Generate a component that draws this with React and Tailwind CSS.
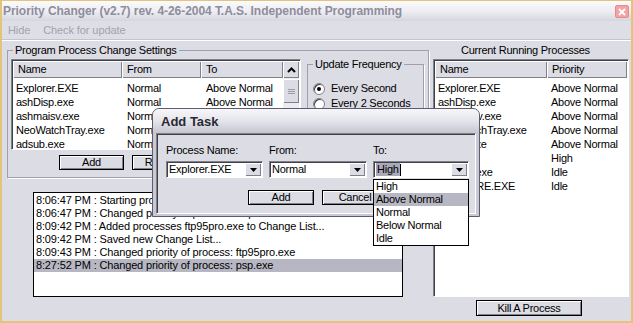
import React from "react";

const changeRows = [
  ["Explorer.EXE", "Normal", "Above Normal"],
  ["ashDisp.exe", "Normal", "Above Normal"],
  ["ashmaisv.exe", "Normal", "Above Normal"],
  ["NeoWatchTray.exe", "Normal", "Above Normal"],
  ["adsub.exe", "Normal", "Above Normal"],
];

const procRows = [
  ["Explorer.EXE", "Above Normal"],
  ["ashDisp.exe", "Above Normal"],
  ["ashmaisv.exe", "Above Normal"],
  ["NeoWatchTray.exe", "Above Normal"],
  ["adsub.exe", "Above Normal"],
  ["psp.exe", "High"],
  ["spoolsv.exe", "Idle"],
  ["IEXPLORE.EXE", "Idle"],
];

const logLines = [
  "8:06:47 PM : Starting process monitor...",
  "8:06:47 PM : Changed priority of process: Explorer.EXE",
  "8:09:42 PM : Added processes ftp95pro.exe to Change List...",
  "8:09:42 PM : Saved new Change List...",
  "8:09:43 PM : Changed priority of process: ftp95pro.exe",
  "8:27:52 PM : Changed priority of process: psp.exe",
];

const sunken =
  "border border-t-[#808088] border-l-[#808088] border-r-white border-b-white shadow-[inset_1px_1px_0_#404048]";
const raised = "bg-[#dcdce4] shadow-[inset_1px_1px_0_#fff,inset_-1px_-1px_0_#808088]";
const button =
  "border border-black bg-[#dcdce4] shadow-[inset_1px_1px_0_#fff,inset_-1px_-1px_0_#808088] flex items-center justify-center leading-none";

function Header({ className, children }) {
  return (
    <div className={`h-[17px] flex items-center pl-[5px] ${raised} ${className}`}>
      {children}
    </div>
  );
}

function DropArrow() {
  return (
    <div className={`w-[16px] h-full flex items-center justify-center ${raised}`}>
      <svg width="7" height="4" viewBox="0 0 7 4">
        <path d="M0 0h7L3.5 4z" fill="#000" />
      </svg>
    </div>
  );
}

function Radio({ checked, label }) {
  return (
    <div className="h-[15px] flex items-center gap-[6px]">
      <div className="w-[12px] h-[12px] rounded-full bg-white border border-[#808088] shadow-[inset_1px_1px_0_#404048] flex items-center justify-center">
        {checked && <div className="w-[4px] h-[4px] rounded-full bg-black" />}
      </div>
      <span>{label}</span>
    </div>
  );
}

function AddTask() {
  return (
    <div className="absolute left-[150px] top-[107px] w-[328px] h-[109px] rounded-t-[7px] border border-[#5c5c6c] bg-[#c9c9d5] flex flex-col overflow-visible">
      <div className="h-[24px] rounded-t-[6px] bg-gradient-to-b from-[#f7f7fa] via-[#e4e4ec] to-[#c6c6d2] flex items-center pl-[8px]">
        <span className="font-bold text-[13px] text-[#2a2a32] tracking-[0px]">Add Task</span>
      </div>
      <div className={`flex-1 mx-[3px] mb-[2px] bg-[#dcdce4] ${sunken} pl-[9px] pt-[10px] flex flex-col`}>
        <div className="flex gap-[6px]">
          <div className="flex flex-col gap-[4px] w-[97px]">
            <span className="h-[13px]">Process Name:</span>
            <div className={`h-[17px] bg-white flex items-center pr-[1px] py-[1px] ${sunken}`}>
              <span className="flex-1 pl-[2px]">Explorer.EXE</span>
              <DropArrow />
            </div>
          </div>
          <div className="flex flex-col gap-[4px] w-[98px]">
            <span className="h-[13px]">From:</span>
            <div className={`h-[17px] bg-white flex items-center pr-[1px] py-[1px] ${sunken}`}>
              <span className="flex-1 pl-[2px]">Normal</span>
              <DropArrow />
            </div>
          </div>
          <div className="flex flex-col gap-[4px] w-[96px]">
            <span className="h-[13px]">To:</span>
            <div className={`relative h-[17px] bg-white flex items-center pr-[1px] py-[1px] ${sunken}`}>
              <span className="flex-1 pl-[2px] flex items-center">
                <span className="bg-[#a9a9b9] px-[1px]">High</span>
                <span className="w-[1px] h-[12px] bg-black" />
              </span>
              <DropArrow />
              <div className="absolute left-[-1px] top-[17px] w-[96px] bg-white border border-black flex flex-col z-10">
                <span className="h-[13px] pl-[2px]">High</span>
                <span className="h-[13px] pl-[2px] bg-[#b7b7c3]">Above Normal</span>
                <span className="h-[13px] pl-[2px]">Normal</span>
                <span className="h-[13px] pl-[2px]">Below Normal</span>
                <span className="h-[13px] pl-[2px]">Idle</span>
              </div>
            </div>
          </div>
        </div>
        <div className="flex gap-[8px] ml-[82px] mt-[12px]">
          <div className={`w-[66px] h-[15px] ${button}`}>Add</div>
          <div className={`w-[66px] h-[15px] ${button}`}>Cancel</div>
        </div>
      </div>
    </div>
  );
}

export default function App() {
  return (
    <div className="relative w-[633px] h-[323px] overflow-hidden bg-[#dcdce4] border-t border-x-2 border-b-2 border-[#e3c47a] flex flex-col font-['Liberation_Sans',Arial,sans-serif] text-[11px] leading-[13px] tracking-[-0.25px] text-black">
      {/* title bar */}
      <div className="h-[20px] flex items-start justify-between pl-[1px] pr-[2px] pt-[3px] bg-gradient-to-b from-[#fbfbfd] via-[#eeeef3] to-[#d6d6e0]">
        <span className="font-bold text-[12px] leading-[15px] text-[#8d8d9b] tracking-[-0.05px]">
          Priority Changer (v2.7) rev. 4-26-2004 T.A.S. Independent Programming
        </span>
        <div className="mt-[1px] w-[14px] h-[13px] rounded-[2px] bg-[#f2a4a4] border border-[#e48c8c] flex items-center justify-center">
          <svg width="8" height="8" viewBox="0 0 8 8">
            <path d="M1 1l6 6M7 1L1 7" stroke="#fff" strokeWidth="1.8" />
          </svg>
        </div>
      </div>

      {/* menu */}
      <div className="h-[20px] flex items-start gap-[13px] pl-[6px] pt-[3px] text-[#a2a2ac] tracking-[-0.1px] bg-[#dedee6] border-b border-white shadow-[inset_0_-1px_0_#c4c4ce]">
        <span>Hide</span>
        <span>Check for update</span>
      </div>

      <div className="flex flex-1">
        {/* left column */}
        <div className="w-[428px] flex flex-col">
          <fieldset className="m-0 p-0 ml-[5px] mt-[3px] w-[422px] h-[134px] min-w-0 border border-[#a0a0ac] shadow-[1px_1px_0_#fff]">
            <legend className="ml-[5px] px-[2px] leading-[13px]">Program Process Change Settings</legend>
            <div className="flex pl-[3px] pt-[2px]">
              <div className="w-[290px] flex flex-col">
                <div className={`h-[91px] bg-white flex ${sunken} p-[1px]`}>
                  <div className="flex-1 flex flex-col">
                    <div className="flex">
                      <Header className="w-[109px]">Name</Header>
                      <Header className="w-[79px]">From</Header>
                      <Header className="flex-1">To</Header>
                    </div>
                    <div className="pt-[3px] flex flex-col">
                      {changeRows.map((r, i) => (
                        <div key={i} className="h-[14px] flex items-center">
                          <span className="w-[109px] pl-[3px]">{r[0]}</span>
                          <span className="w-[79px] pl-[5px]">{r[1]}</span>
                          <span className="pl-[5px]">{r[2]}</span>
                        </div>
                      ))}
                    </div>
                  </div>
                  <div className="w-[16px] flex flex-col bg-[#ececf0]">
                    <div className={`h-[17px] flex items-center justify-center ${raised}`}>
                      <svg width="9" height="6" viewBox="0 0 9 6">
                        <path d="M1 5l3.5-3.5L8 5" fill="none" stroke="#000" strokeWidth="2" />
                      </svg>
                    </div>
                    <div className={`h-[24px] mt-[1px] flex flex-col items-center justify-center gap-[1px] ${raised}`}>
                      <div className="w-[7px] h-[1px] bg-[#9a9aa6]" />
                      <div className="w-[7px] h-[1px] bg-[#9a9aa6]" />
                      <div className="w-[7px] h-[1px] bg-[#9a9aa6]" />
                    </div>
                  </div>
                </div>
                <div className="flex gap-[8px] ml-[48px] mt-[5px]">
                  <div className={`w-[65px] h-[15px] ${button}`}>Add</div>
                  <div className={`w-[65px] h-[15px] ${button}`}>Remove</div>
                </div>
              </div>
              <fieldset className="m-0 p-0 ml-[6px] -mt-[1px] w-[117px] h-[112px] min-w-0 border border-[#a0a0ac] shadow-[1px_1px_0_#fff]">
                <legend className="ml-[5px] px-[2px] leading-[13px]">Update Frequency</legend>
                <div className="flex flex-col pl-[5px] pt-[10px]">
                  <Radio checked label="Every Second" />
                  <Radio label="Every 2 Seconds" />
                  <Radio label="Every 5 Seconds" />
                </div>
              </fieldset>
            </div>
          </fieldset>

          <div className="ml-[31px] mt-[14px] w-[370px] h-[105px] bg-white border border-black flex flex-col pt-[1px]">
            {logLines.map((l, i) => (
              <div
                key={i}
                className={`h-[13px] pl-[2px] tracking-[-0.15px] ${i === logLines.length - 1 ? "bg-[#b7b7c3]" : ""}`}
              >
                {l}
              </div>
            ))}
          </div>
        </div>

        {/* right column */}
        <div className="flex-1 flex flex-col">
          <span className="mt-[3px] ml-[31px] h-[13px]">Current Running Processes</span>
          <div className={`mt-[2px] ml-[3px] w-[196px] h-[238px] bg-white ${sunken} p-[1px] flex flex-col`}>
            <div className="flex">
              <Header className="w-[112px]">Name</Header>
              <Header className="flex-1">Priority</Header>
            </div>
            <div className="pt-[3px] flex flex-col">
              {procRows.map((r, i) => (
                <div key={i} className="h-[14px] flex items-center">
                  <span className="w-[112px] pl-[3px]">{r[0]}</span>
                  <span className="pl-[4px]">{r[1]}</span>
                </div>
              ))}
            </div>
          </div>
          <div className={`mt-[3px] ml-[46px] w-[106px] h-[16px] ${button}`}>Kill A Process</div>
        </div>
      </div>

      <AddTask />
    </div>
  );
}
